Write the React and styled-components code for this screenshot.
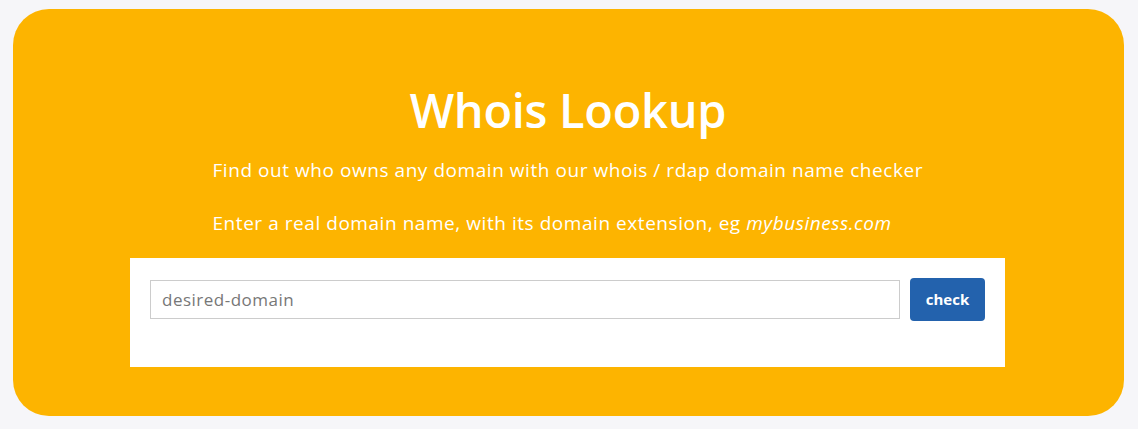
import React from 'react';
import styled, { createGlobalStyle } from 'styled-components';

const GlobalStyle = createGlobalStyle`
  html, body {
    margin: 0;
    padding: 0;
    background: #f6f6f9;
  }
  body {
    font-family: "Open Sans", "Noto Sans", sans-serif;
  }
`;

const Page = styled.div`
  padding: 9px 14px 13px 13px;
`;

const Hero = styled.section`
  background: #fdb400;
  border-radius: 36px;
  height: 407px;
  box-sizing: border-box;
  padding: 70px 0 0;
  display: flex;
  flex-direction: column;
  align-items: center;
`;

const Title = styled.h1`
  margin: 0 1px 0 0;
  color: #fff;
  font-family: "Open Sans", sans-serif;
  font-weight: 600;
  font-size: 47px;
  line-height: 62px;
  letter-spacing: -0.3px;
`;

const Lead = styled.div`
  width: 712px;
  margin-top: 15px;
  color: #fff;
  font-size: 19px;
  line-height: 28px;
  letter-spacing: 0.55px;
  display: flex;
  flex-direction: column;
  gap: 25px;
  p {
    margin: 0;
  }
  em {
    font-style: italic;
  }
`;

const SearchBox = styled.form`
  margin: 21px 2px 0 0;
  width: 875px;
  height: 109px;
  box-sizing: border-box;
  background: #fff;
  padding: 20px;
  display: flex;
  align-items: flex-start;
  gap: 10px;
`;

const DomainInput = styled.input`
  flex: 1;
  height: 39px;
  margin-top: 2px;
  box-sizing: border-box;
  border: 1px solid #cccccc;
  padding: 0 11px;
  font-family: "Open Sans", sans-serif;
  font-size: 17px;
  letter-spacing: 0.5px;
  color: #333;
  outline: none;
  &::placeholder {
    color: #777;
  }
`;

const CheckButton = styled.button`
  width: 75px;
  height: 43px;
  border: none;
  border-radius: 4px;
  background: #2362ad;
  color: #fff;
  font-family: "Open Sans", sans-serif;
  font-weight: 700;
  font-size: 15px;
  padding: 0 0 2px;
  cursor: pointer;
`;

export default function App() {
  return (
    <>
      <GlobalStyle />
      <Page>
        <Hero>
          <Title>Whois Lookup</Title>
          <Lead>
            <p>Find out who owns any domain with our whois / rdap domain name checker</p>
            <p>
              Enter a real domain name, with its domain extension, eg <em>mybusiness.com</em>
            </p>
          </Lead>
          <SearchBox onSubmit={(e) => e.preventDefault()}>
            <DomainInput type="text" placeholder="desired-domain" />
            <CheckButton type="submit">check</CheckButton>
          </SearchBox>
        </Hero>
      </Page>
    </>
  );
}
